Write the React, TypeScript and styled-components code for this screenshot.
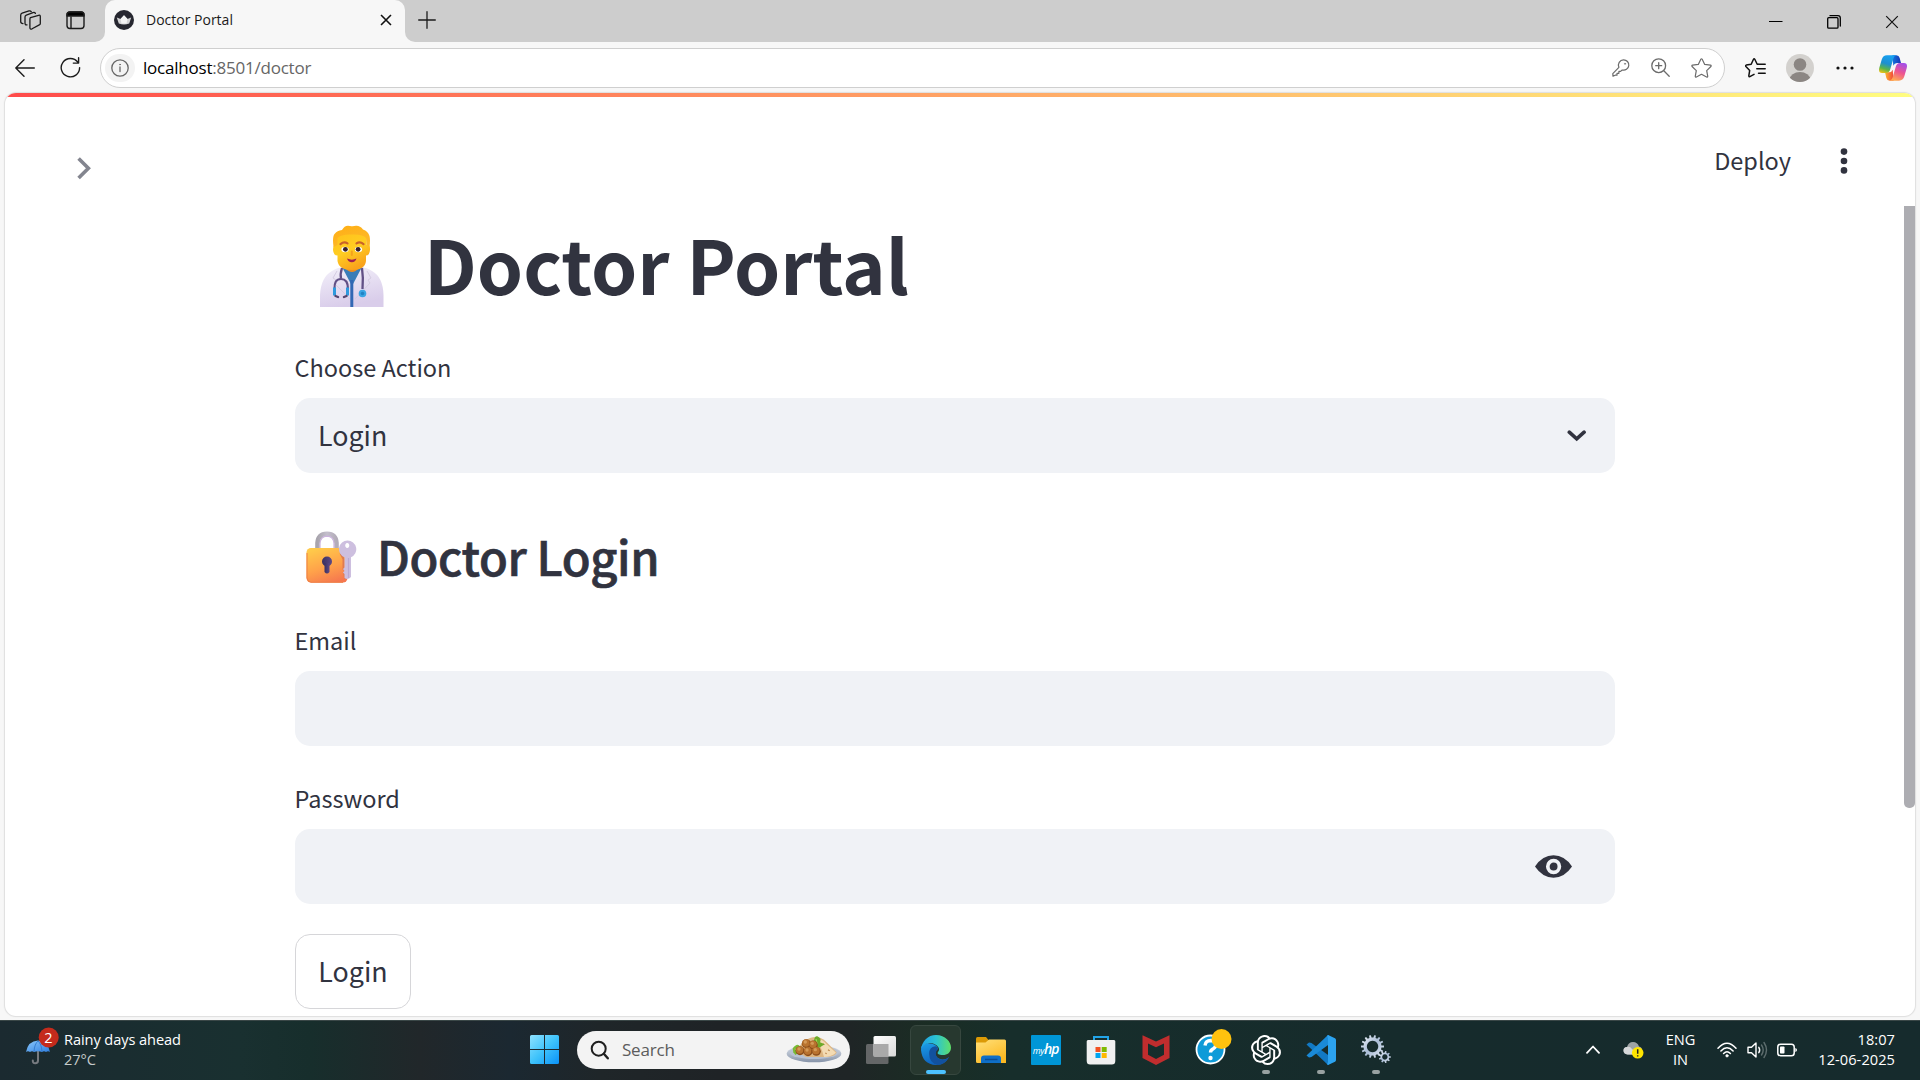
import React from "react";
import styled, { createGlobalStyle } from "styled-components";
import { SiOpenai } from "react-icons/si";

const sans = `"Noto Sans CJK SC", "Noto Sans", sans-serif`;
const system = `"Open Sans", "Noto Sans", sans-serif`;

const GlobalStyle = createGlobalStyle`
  * { box-sizing: border-box; }
  html, body { margin: 0; padding: 0; overflow: hidden; }
  svg { display: block; flex: none; }
`;

const Screen = styled.div`
  width: 1920px;
  height: 1080px;
  display: flex;
  flex-direction: column;
  overflow: hidden;
  background: #f7f7f7;
  font-family: ${system};
`;

/* ---------- Browser window ---------- */

const TabStrip = styled.div`
  height: 42px;
  display: flex;
  background: #f7f7f7;
`;

const StripStart = styled.div`
  width: 105px;
  display: flex;
  align-items: center;
  padding: 0 0 2px 20px;
  gap: 25px;
  background: #cdcdcd;
  border-bottom-right-radius: 10px;
`;

const TabBack = styled.div`
  width: 300px;
  background: #cdcdcd;
`;

const Tab = styled.div`
  height: 42px;
  display: flex;
  align-items: center;
  padding: 0 13px 2px 9px;
  background: #f7f7f7;
  border-radius: 10px 10px 0 0;
`;

const TabTitle = styled.span`
  flex: 1;
  margin: -1px 0 0 12px;
  font-size: 14px;
  letter-spacing: 0;
  color: #1b1b1b;
  white-space: nowrap;
`;

const StripEnd = styled.div`
  flex: 1;
  display: flex;
  align-items: center;
  justify-content: space-between;
  padding: 0 21px 3px 13px;
  background: #cdcdcd;
  border-bottom-left-radius: 10px;
`;

const WindowControls = styled.div`
  display: flex;
  align-items: center;
  gap: 44px;
  padding-top: 4px;
`;

const Toolbar = styled.div`
  height: 51px;
  display: flex;
  align-items: center;
  padding: 0 13px 0 15px;
`;

const AddressBar = styled.div`
  width: 1625px;
  height: 40px;
  margin-left: 19px;
  padding: 0 12px 0 4px;
  display: flex;
  align-items: center;
  border: 1px solid #cfcfcf;
  border-radius: 20px;
  background: #fff;
`;

const SiteInfo = styled.div`
  width: 30px;
  height: 28px;
  border-radius: 14px;
  display: flex;
  align-items: center;
  justify-content: center;
  background: #f3f3f3;
`;

const Url = styled.span`
  flex: 1;
  margin-left: 8px;
  font-size: 17px;
  letter-spacing: -0.22px;
  color: #666;
  white-space: nowrap;
  b { font-weight: 400; color: #000; }
`;

const AddressActions = styled.div`
  display: flex;
  align-items: center;
  gap: 21px;
`;

const ToolbarActions = styled.div`
  flex: 1;
  display: flex;
  align-items: center;
  padding-left: 20px;
`;

/* ---------- Page ---------- */

const Page = styled.div`
  height: 923px;
  margin: 0 5px;
  display: flex;
  flex-direction: column;
  overflow: hidden;
  background: #fff;
  border-radius: 11px;
  box-shadow: 0 0 1px 1px #dedede;
`;

const Decoration = styled.div`
  height: 4px;
  flex: none;
  background: linear-gradient(90deg, #ff4b4b, #fffd80);
`;

const PageHeader = styled.header`
  height: 109px;
  display: flex;
  justify-content: space-between;
  padding: 44px 66px 0 70px;
`;

const HeaderLeft = styled.div`
  padding-top: 15px;
`;

const HeaderRight = styled.div`
  height: 40px;
  display: flex;
  align-items: center;
  gap: 48px;
`;

const Deploy = styled.span`
  font: 400 23.5px/39px ${sans};
  height: 40px;
  color: #31333f;
`;

const Scroller = styled.div`
  flex: 1;
  display: flex;
  justify-content: space-between;
  min-height: 0;
`;

const Thumb = styled.div`
  width: 11px;
  height: 602px;
  border-radius: 0 0 5px 5px;
  background: #adadb2;
`;

const Main = styled.main`
  width: 1610px;
  padding: 12px 0 0 290px;
  font-family: ${sans};
  color: #31333f;
`;

const Title = styled.h1`
  height: 90px;
  margin: 0 0 41px;
  padding-left: 25px;
  display: flex;
  align-items: center;
  gap: 40px;
  font-size: 74px;
  line-height: 90px;
  font-weight: 700;
  white-space: nowrap;
  svg { margin-top: 6px; }
`;

const Subtitle = styled.h3`
  height: 64px;
  margin: 51px 0 34px;
  padding-left: 11px;
  display: flex;
  align-items: center;
  gap: 20px;
  font-size: 47px;
  line-height: 64px;
  font-weight: 500;
  letter-spacing: -0.36px;
  -webkit-text-stroke: 0.7px #31333f;
  white-space: nowrap;
  svg { margin-top: 1px; }
`;

const Field = styled.div`
  & + & { margin-top: 34px; }
`;

const Label = styled.label`
  display: block;
  height: 36px;
  margin: 0 0 13px -0.5px;
  font-size: 23.5px;
  line-height: 36px;
`;

const Control = styled.div<{ $end: number; $split?: boolean }>`
  height: 75px;
  padding: 0 ${(p) => p.$end}px 0 23px;
  display: flex;
  align-items: center;
  justify-content: ${(p) => (p.$split ? "space-between" : "flex-end")};
  border-radius: 15px;
  background: #f0f2f6;
  font-size: 26.8px;
`;

const Value = styled.span`
  height: 75px;
  line-height: 73px;
`;

const SubmitButton = styled.button`
  width: 116px;
  height: 75px;
  margin-top: 30px;
  padding: 0 0 2px;
  display: block;
  border: 1px solid #d6d6d9;
  border-radius: 15px;
  background: #fff;
  color: #31333f;
  font: 400 26.8px/70px ${sans};
`;

/* ---------- Taskbar ---------- */

const Taskbar = styled.footer`
  height: 60px;
  margin-top: 4px;
  padding-bottom: 2px;
  display: flex;
  align-items: center;
  border-top: 1px solid #3a4747;
  color: #fff;
  background: linear-gradient(90deg, #1b2a30 0, #193030 240px, #172e2c 310px, #21272a 420px,
    #1b2831 510px, #1f2629 600px, #1f2326 720px, #1f2526 850px, #1a2d24 930px, #172e2b 1010px, #162b2c 1400px, #162b2d 1920px);
`;

const Widgets = styled.div`
  width: 530px;
  padding-left: 25px;
  display: flex;
  align-items: center;
  gap: 4px;
  & > svg { margin-bottom: 7px; }
`;

const TrayText = styled.div<{ $align?: string; $spacing?: number }>`
  margin-bottom: 2px;
  font-size: 14.6px;
  line-height: 20px;
  letter-spacing: ${(p) => p.$spacing ?? -0.08}px;
  text-align: ${(p) => p.$align ?? "left"};
  white-space: nowrap;
`;

const Muted = styled.div`
  color: #c5cbcb;
`;

const SearchBox = styled.div`
  width: 273px;
  height: 38px;
  margin-left: 18px;
  padding: 0 8px 0 13px;
  display: flex;
  align-items: center;
  border-radius: 19px;
  background: #f3f3f3;
  color: #5c5c5c;
  font-size: 17px;
  letter-spacing: -0.2px;
  span { flex: 1; margin-left: 12px; }
`;

const Apps = styled.div`
  display: flex;
  margin-left: 3px;
`;

const AppSlot = styled.div<{ $active?: boolean }>`
  width: 51px;
  height: 50px;
  margin: 0 2px;
  padding-top: 9px;
  display: flex;
  flex-direction: column;
  align-items: center;
  gap: 5px;
  border-radius: 6px;
  border: 1px solid ${(p) => (p.$active ? "#37473f" : "transparent")};
  background: ${(p) => (p.$active ? "#27382f" : "transparent")};
`;

const Running = styled.div<{ $active?: boolean }>`
  width: ${(p) => (p.$active ? 20 : 8)}px;
  height: 4px;
  border-radius: 2px;
  background: ${(p) => (p.$active ? "#4cc2ff" : "#98a1a1")};
`;

const HpTile = styled.div`
  width: 30px;
  height: 30px;
  border-radius: 1px;
  background: #0096d6;
  font: italic 400 9px/28px ${system};
  letter-spacing: -0.4px;
  text-align: center;
  white-space: nowrap;
  color: #fff;
  b { font-size: 14px; font-weight: 600; letter-spacing: -1.2px; }
`;

const Tray = styled.div`
  margin-left: auto;
  padding-right: 25px;
  display: flex;
  align-items: center;
`;

const Gap = styled.div<{ $w: number }>`
  width: ${(p) => p.$w}px;
`;

/* ---------- Drawings ---------- */

const line = (w = 1.4, c = "#1b1b1b") => ({
  fill: "none",
  stroke: c,
  strokeWidth: w,
  strokeLinecap: "round" as const,
  strokeLinejoin: "round" as const,
});

const WorkspacesIcon = () => (
  <svg width="21" height="20" viewBox="0 0 21 20" {...line(1.3)}>
    <path d="M10.5 7.6 18.6 5.3q1.7-.4 1.7 1.2v7q0 1-1 1.4l-7.2 3.9q-2 .9-2.2-1.1V9.2q0-1.2.6-1.6z" />
    <path d="M7 14.800q-2 .4-2-1.500V7q0-1.300 1.300-1.900L13 2.600q1.700-.5 2.400.8" />
    <path d="M3 13.600q-2.300 0-2.300-2V5.200q0-1.500 1.400-2L9 .9q1.500-.4 2.200.7" />
  </svg>
);

const TabActionsIcon = () => (
  <svg width="19" height="19" viewBox="0 0 19 19" {...line(1.4)}>
    <rect x="1" y="1" width="17" height="16.500" rx="3" />
    <path d="M1 5V4q0-3 3-3h11q3 0 3 3v1z" fill="#000" />
    <path d="M5 6v11" />
  </svg>
);

const Favicon = () => (
  <svg width="20" height="20" viewBox="0 0 20 20">
    <circle cx="10" cy="10" r="10" fill="#262730" />
    <path d="M2.800 7.500 6.500 9 10 5.300 13.500 9l3.700-1.500-2 6q-5.200 2-10.400 0z" fill="#d4d4d6" />
    <path d="M10 5.300 13.500 9l-1 4.500H7.500L6.500 9z" fill="#f4f4f4" />
  </svg>
);

const CrossIcon = ({ size, w }: { size: number; w: number }) => (
  <svg width={size} height={size} viewBox="0 0 14 14" {...line(w, "#111")} strokeLinecap="butt">
    <path d="M1.200 1.200 12.800 12.800M12.800 1.200 1.200 12.800" />
  </svg>
);

const PlusIcon = () => (
  <svg width="18" height="18" viewBox="0 0 18 18" {...line(1.300)}>
    <path d="M9 .7v16.600M.7 9h16.600" />
  </svg>
);

const RestoreIcon = () => (
  <svg width="14" height="14" viewBox="0 0 14 14" {...line(1.300, "#000")}>
    <rect x=".7" y="2.700" width="10.300" height="10.500" rx="1" />
    <path d="M3 .7h8q2.300 0 2.300 2.300v8" />
  </svg>
);

const BackIcon = () => (
  <svg width="20" height="18" viewBox="0 0 20 18" {...line(1.400)}>
    <path d="M19.300 9H.8M9 .8.8 9 9 17.200" />
  </svg>
);

const ReloadIcon = () => (
  <svg width="21" height="21" viewBox="0 0 21 21" {...line(1.400)}>
    <path d="M19.600 10.600A9.200 9.200 0 1 1 17.800 5.200M18.600.8v5.300h-5.300" />
  </svg>
);

const InfoIcon = () => (
  <svg width="18" height="18" viewBox="0 0 18 18" {...line(1.300, "#666")}>
    <circle cx="9" cy="9" r="8.200" />
    <path d="M9 8v4.500" />
    <circle cx="9" cy="5.600" r=".5" fill="#666" stroke="#666" strokeWidth=".6" />
  </svg>
);

const KeyIcon = () => (
  <svg width="18" height="18" viewBox="0 0 18 18" {...line(1.200, "#6b6b6b")}>
    <path d="M11.500.8a5.200 5.200 0 1 1-1.300 10.200L8.600 12.400H6.900v1.900H5v1.900H3.200L1 17.200.8 14.600 6.900 8.300A5.300 5.300 0 0 1 11.500.8z" />
    <circle cx="13" cy="4.800" r=".7" fill="#6b6b6b" strokeWidth=".3" />
  </svg>
);

const ZoomIcon = () => (
  <svg width="19" height="19" viewBox="0 0 19 19" {...line(1.300, "#6b6b6b")}>
    <circle cx="7.700" cy="7.700" r="6.900" />
    <path d="M12.800 12.800 18.200 18.200M7.700 4.700v6M4.700 7.700h6" />
  </svg>
);

const StarIcon = () => (
  <svg width="21" height="20" viewBox="0 0 21 20" {...line(1.200, "#6b6b6b")}>
    <path d="M9.800 1.300q.7-1.100 1.400 0l2.500 5.100 5.700.8q1.300.3.5 1.300l-4.200 4.100 1 5.600q.1 1.300-1.100.8L10.500 16.300l-5.100 2.700q-1.200.5-1.100-.8l1-5.600L1.100 8.500q-.8-1 .5-1.300l5.700-.8z" />
  </svg>
);

const FavoritesIcon = () => (
  <svg width="21" height="20" viewBox="0 0 21 20" {...line(1.500, "#111")}>
    <path d="M13 6.300h-.8L9.800 1.300q-.7-1.100-1.300 0L6.200 6.300l-4.900.8q-1.200.4-.4 1.300l3.800 4-.9 5.400q0 1.200 1.100.8l4.100-2.200" />
    <path d="M13.500 6.300h6.700M11.800 10.800h8.400M13.500 15.200h6.700" />
  </svg>
);

const Avatar = () => (
  <svg width="28" height="28" viewBox="0 0 28 28">
    <clipPath id="face"><circle cx="14" cy="14" r="14" /></clipPath>
    <g clipPath="url(#face)">
      <rect width="28" height="28" fill="#d3d1ce" />
      <circle cx="14" cy="10.500" r="6.300" fill="#8b8683" />
      <ellipse cx="14" cy="25.500" rx="10.300" ry="7.500" fill="#8b8683" />
    </g>
  </svg>
);

const MoreIcon = () => (
  <svg width="18" height="4" viewBox="0 0 18 4" fill="#111">
    <circle cx="2" cy="2" r="1.600" /><circle cx="9" cy="2" r="1.600" /><circle cx="16" cy="2" r="1.600" />
  </svg>
);

const CopilotIcon = () => (
  <svg width="28" height="26" viewBox="0 0 84 78">
    <defs>
      <linearGradient id="cpA" x1="0.500" y1="0" x2="0.200" y2="1">
        <stop offset="0" stopColor="#18a0f0" /><stop offset=".45" stopColor="#1d8fd0" />
        <stop offset=".75" stopColor="#5bb548" /><stop offset="1" stopColor="#f2c216" />
      </linearGradient>
      <linearGradient id="cpB" x1="0.700" y1="0" x2="0.300" y2="1">
        <stop offset="0" stopColor="#a44fe8" /><stop offset=".5" stopColor="#ee5590" /><stop offset="1" stopColor="#ffad50" />
      </linearGradient>
      <linearGradient id="cpC"><stop offset="0" stopColor="#1275dc" /><stop offset="1" stopColor="#1736b5" /></linearGradient>
      <linearGradient id="cpD"><stop offset="0" stopColor="#ffb52e" /><stop offset="1" stopColor="#f0453c" /></linearGradient>
    </defs>
    <path d="M40 1h12q8 0 10 8l4 15H54q-8 0-11 8z" fill="url(#cpC)" />
    <path d="M44 77H32q-8 0-10-8l-4-17h12q8 0 11-8z" fill="url(#cpD)" />
    <path d="M24 1h27q-6 2-8 10L34 42q-3 12-13 12H9Q-3 54 1 38L8 14Q12 1 24 1z" fill="url(#cpA)" />
    <path d="M60 77H33q6-2 8-10l9-31q3-12 13-12h12q12 0 8 16l-7 24Q72 77 60 77z" fill="url(#cpB)" />
  </svg>
);

const SidebarChevron = () => (
  <svg width="18" height="26" viewBox="0 0 18 26" fill="none" stroke="#83858f" strokeWidth="3.600">
    <path d="M3.600 2.500 13.400 12.300 3.600 22.100" />
  </svg>
);

const KebabIcon = () => (
  <svg width="10" height="26" viewBox="0 0 10 26" fill="#31333f">
    <circle cx="5" cy="3.600" r="3.300" /><circle cx="5" cy="13" r="3.300" /><circle cx="5" cy="22.400" r="3.300" />
  </svg>
);

const DoctorEmoji = () => (
  <svg width="64" height="82" viewBox="0 0 64 82">
    <defs>
      <linearGradient id="coat" x1="0" y1="0" x2="0.300" y2="1">
        <stop offset="0" stopColor="#f3f0fa" /><stop offset="1" stopColor="#d9cdea" />
      </linearGradient>
      <linearGradient id="skin" x1="0" y1="0" x2="0.500" y2="1">
        <stop offset="0" stopColor="#ffc01a" /><stop offset=".55" stopColor="#ffcd22" /><stop offset="1" stopColor="#f9a31c" />
      </linearGradient>
      <linearGradient id="hair" x1="0" y1="0" x2="0.600" y2="1">
        <stop offset="0" stopColor="#ffae12" /><stop offset="1" stopColor="#fdb92c" />
      </linearGradient>
    </defs>
    <path d="M0 82V70Q1 52 12 46 17 42.500 24 42H40Q47 42.500 52 46 63 52 63.500 70V82z" fill="url(#coat)" />
    <path d="M22 42 32 61 42 42z" fill="#3a7cb8" />
    <path d="M30.300 55h3v27h-3z" fill="#3268b4" />
    <path d="M25 43Q32 51 39 43z" fill="#ef8d20" />
    <path d="M17 7H46.500V20Q50.500 19 50 25 49.500 30.500 46 30.500V36Q45 45 32 45 19 45 17.500 36V30.500Q13.500 30.500 13 25 13 19 17 20z" fill="url(#skin)" />
    <path d="M13.500 22Q12 11 15 8.500 17 5.500 22 5 25-.5 30 1 33 1.500 36 .8 40 .5 43 4.500 48 6 49.500 11 50.500 15 49.500 22L46.500 20 46 13Q43 9 32 9.500 21 9 17.500 13V20z" fill="url(#hair)" />
    <path d="M20.500 19.200q3.500-3 7-.8M43.500 19.200q-3.500-3-7-.8" fill="none" stroke="#c9632a" strokeWidth="2.200" strokeLinecap="round" />
    <ellipse cx="25" cy="24.500" rx="3.600" ry="2.700" fill="#fff" /><ellipse cx="38.500" cy="24.500" rx="3.600" ry="2.700" fill="#fff" />
    <circle cx="25.400" cy="24.300" r="2.400" fill="#36212b" /><circle cx="38.100" cy="24.300" r="2.400" fill="#36212b" />
    <path d="M31.800 26.500v3.500" stroke="#f5a11b" strokeWidth="2" strokeLinecap="round" />
    <path d="M27 33.500q5 2.300 9.500 0-1 3.700-4.700 3.700t-4.800-3.700z" fill="#a1204f" />
    <path d="M17 46 13 53l3 2-2 3L30 74M47 46l4 7-3 2 2 3L35 74" fill="none" stroke="#d5cce2" strokeWidth="1" />
    <path d="M22 43Q20 49 21 53.500M42 43Q43.500 53 42.500 64" fill="none" stroke="#625086" strokeWidth="2.300" />
    <path d="M14.500 64Q14 54 21 54T28 64" fill="none" stroke="#625086" strokeWidth="2.200" />
    <path d="M14.500 62.500v8M27.500 62.500v8" stroke="#2e9ade" strokeWidth="3" />
    <path d="M15.500 71l2.500 1M26.500 71l-2.500 1" stroke="#55466f" strokeWidth="2.400" strokeLinecap="round" />
    <circle cx="42.500" cy="68.500" r="3.800" fill="#3aa5e4" /><circle cx="42.500" cy="68.500" r="1.800" fill="#2183c4" />
  </svg>
);

const LockEmoji = () => (
  <svg width="51" height="52" viewBox="0 0 51 52">
    <defs>
      <linearGradient id="lock" x1="0.300" y1="0" x2="0.700" y2="1">
        <stop offset="0" stopColor="#ffc94a" /><stop offset=".55" stopColor="#ffa14a" /><stop offset="1" stopColor="#f5774f" />
      </linearGradient>
      <linearGradient id="shackle"><stop offset="0" stopColor="#a8a4ad" /><stop offset=".5" stopColor="#c4bfcc" /><stop offset="1" stopColor="#b3acb9" /></linearGradient>
      <linearGradient id="hole"><stop offset="0" stopColor="#3a3160" /><stop offset="1" stopColor="#5d4885" /></linearGradient>
    </defs>
    <path d="M11.500 18V12Q12 3 21 2.700 30 3 30.500 12v6" fill="none" stroke="url(#shackle)" strokeWidth="4.600" />
    <path d="M14 17V12.500Q14.500 5.500 21 5.200 27.500 5.500 28 12.500V17" fill="none" stroke="#cbb3dd" strokeWidth="1.200" />
    <rect x=".5" y="17" width="41" height="34.500" rx="4.500" fill="url(#lock)" />
    <path d="M1 22v25q.5 4 4 4.300h32" fill="none" stroke="#ee7f45" strokeWidth="1" />
    <circle cx="21" cy="30.500" r="5" fill="url(#hole)" /><path d="M18.500 32h5v9q-2.500 3-5 0z" fill="url(#hole)" />
    <path d="M34.500 22Q37 27 37.500 28v10l2 2-1.500 2 1.500 6" fill="none" stroke="#df7b51" strokeWidth="2" />
    <path fillRule="evenodd" d="M41.500 9.500a8.700 8.700 0 0 1 3.500 16.700V46q-3 3.500-6.500 1V43l-1.600-1.500L38.500 40 37 38l1.500-1.500V26.300A8.700 8.700 0 0 1 41.500 9.500zm-.3 2.500a2 2.500 0 1 0 .1 0z" fill="#cdbfdf" />
    <path d="M42.500 27v20" stroke="#bba9d2" strokeWidth="1.200" />
  </svg>
);

const SelectChevron = () => (
  <svg width="20" height="14" viewBox="0 0 20 14" {...line(3.600, "#31333f")} strokeLinejoin="miter">
    <path d="M2.300 3.200 9.700 9.800 17.100 3.200" />
  </svg>
);

const EyeIcon = () => (
  <svg width="37" height="23" viewBox="0 0 37 23">
    <path d="M0 11.500Q7.500.3 18.500.3T37 11.500Q29.500 22.700 18.500 22.700T0 11.500z" fill="#31333f" />
    <circle cx="18.600" cy="11.500" r="5.800" fill="none" stroke="#f0f2f6" strokeWidth="3.700" />
  </svg>
);

const UmbrellaIcon = () => (
  <svg width="35" height="38" viewBox="0 0 35 38">
    <defs><linearGradient id="umb" x1="0" y1="0" x2="1" y2="1"><stop offset="0" stopColor="#8ac8fb" /><stop offset="1" stopColor="#2f7fe0" /></linearGradient></defs>
    <path d="M13 24v9.500q0 2.800-2.700 2.800T7.800 33.500" fill="none" stroke="#777b80" strokeWidth="2" strokeLinecap="round" />
    <path d="M1 25Q3 14 13 13.500 23 14 25 25 23 23.500 21 25 19 23.500 17 25 13 23.500 9 25 7 23.500 5 25 3 23.500 1 25z" fill="url(#umb)" />
    <path d="M9 24.500Q9.500 17 13 14 16.500 17 17 24.500" fill="none" stroke="#2c73c8" strokeWidth=".8" />
    <circle cx="23.700" cy="10.500" r="10" fill="#c42b1c" />
    <text x="23.500" y="15.500" textAnchor="middle" fontSize="14.500" fill="#fff" fontFamily="Open Sans">2</text>
  </svg>
);

const WindowsIcon = () => (
  <svg width="29" height="29" viewBox="0 0 29 29">
    <defs><linearGradient id="win" x1="0" y1="0" x2="1" y2="1"><stop offset="0" stopColor="#8fe2ff" /><stop offset=".5" stopColor="#3fc3fb" /><stop offset="1" stopColor="#0a92f8" /></linearGradient></defs>
    <path d="M1.500 0H14v14H0V1.500Q0 0 1.500 0zM15 0h12.500Q29 0 29 1.500V14H15zM0 15h14v14H1.500Q0 29 0 27.500zM15 15h14v12.500q0 1.500-1.500 1.500H15z" fill="url(#win)" />
  </svg>
);

const MagnifierIcon = () => (
  <svg width="20" height="20" viewBox="0 0 20 20" {...line(2, "#1f1f1f")}>
    <circle cx="8.700" cy="8.700" r="7" /><path d="M13.800 13.800 17.800 18.300" strokeWidth="2.400" />
  </svg>
);

const FoodIcon = () => (
  <svg width="56" height="30" viewBox="0 0 168 90">
    <defs><linearGradient id="plate" x1="0" y1="0" x2="0" y2="1"><stop offset="0" stopColor="#dfe5ee" /><stop offset="1" stopColor="#8693a8" /></linearGradient></defs>
    <ellipse cx="84" cy="56" rx="82" ry="26" fill="url(#plate)" />
    <ellipse cx="84" cy="52" rx="74" ry="20" fill="#b8c2d2" />
    <path d="M34 50Q42 18 74 8 100 2 118 18L152 52Q150 64 120 66L60 66z" fill="#ddb682" />
    <path d="M84 12Q110 10 122 28L150 53Q134 66 114 66 106 30 84 12z" fill="#f3dbb3" />
    <path d="M110 26l5 3M126 44l5 3M118 54l4 2" stroke="#b98145" strokeWidth="3.500" />
    <path d="M82 30q2-30 12-26 14 6 8 18l14 6-16 10z" fill="#6cab2a" />
    <path d="M20 40q14-18 22-6l4 14-18 12-6-8z" fill="#78ba34" />
    <path d="M26 42l14 6M90 12l4 16" stroke="#a9db5a" strokeWidth="3" />
    {[[61, 26], [82, 30], [42, 47], [66, 50], [91, 49]].map(([x, y]) => (
      <g key={`${x}-${y}`}><circle cx={x} cy={y} r="13.500" fill="#8c4d1a" /><circle cx={x - 1} cy={y - 2} r="11" fill="#b9732f" /><circle cx={x - 3} cy={y - 5} r="5" fill="#d49a58" /></g>
    ))}
  </svg>
);

const TaskViewIcon = () => (
  <svg width="30" height="30" viewBox="0 0 30 30">
    <defs><linearGradient id="tv" x1="0" y1="0" x2="1" y2="1"><stop offset="0" stopColor="#fff" /><stop offset="1" stopColor="#d9d9d9" /></linearGradient></defs>
    <rect x="0" y="9" width="22.500" height="20" rx="1.500" fill="#646667" />
    <rect x="7.500" y="1" width="22.500" height="20.500" rx="1.500" fill="url(#tv)" />
    <path d="M7.500 9h15v12.500h-15z" fill="#a9a9a9" />
  </svg>
);

const EdgeIcon = () => (
  <svg width="30" height="30" viewBox="0 0 24 24">
    <defs>
      <linearGradient id="edA" x1="0" y1="0.300" x2="1" y2="0.300"><stop offset="0" stopColor="#1f9fe8" /><stop offset=".5" stopColor="#2bc3d2" /><stop offset="1" stopColor="#5fe06a" /></linearGradient>
      <linearGradient id="edB" x1="0" y1="0" x2="0.300" y2="1"><stop offset="0" stopColor="#1b9de8" /><stop offset="1" stopColor="#0f62bd" /></linearGradient>
    </defs>
    <path d="M0 12Q0 6 6 6.500q7 .5 7.500 4.500-2 1-2 4 .5 4 5.500 4.500 3 0 5.500-2Q19 24 12 24 1 23.500 0 12z" fill="url(#edB)" />
    <path d="M6.500 15Q6.500 9.500 11.500 9q2 .5 2 2.500-1.700 1.200-1.700 3.500.5 4.500 5.500 4.700 3 0 5-2Q18.500 24 13.500 23.900 6.500 22.500 6.500 15z" fill="#12519f" />
    <path d="M0 12C.5 5 5.500 0 12 0c7.500 0 12 5.500 12 10 0 4-3 6-6.500 6-3.300 0-4.800-1-4-2.200 1-1.300 1.300-2.300.5-3.800C12.500 7.500 10 6.300 7 6.300 3.500 6.300.8 8.500 0 12z" fill="url(#edA)" />
  </svg>
);

const ExplorerIcon = () => (
  <svg width="30" height="30" viewBox="0 0 30 30">
    <defs><linearGradient id="fo" x1="0" y1="0" x2="0.600" y2="1"><stop offset="0" stopColor="#ffe07a" /><stop offset="1" stopColor="#fcb922" /></linearGradient></defs>
    <path d="M0 3.500Q0 2 1.500 2H10l3 3.500V10H0z" fill="#dc9a06" />
    <path d="M0 7.500h9.500L13 4.500h15.500Q30 4.500 30 6V28H1.500Q0 28 0 26.500z" fill="url(#fo)" />
    <path d="M5 28v-4.500Q5 20.500 8 20.500H22q3 0 3 3V28z" fill="#0f6fc7" />
    <path d="M9 24.500h12.500" stroke="#0a4d94" strokeWidth="1.500" />
  </svg>
);

const StoreIcon = () => (
  <svg width="30" height="30" viewBox="0 0 30 30">
    <path d="M8 6V2h14v4" fill="none" stroke="#22a5e8" strokeWidth="2" />
    <path d="M.7 6.500Q.7 5 2 5h26q1.300 0 1.300 1.500V26q0 3.500-3.500 3.500H4.200Q.7 29.500.7 26z" fill="#f0f0f0" />
    <path d="M9.500 12h5v5h-5z" fill="#f25022" /><path d="M15.700 12h5v5h-5z" fill="#7fba00" />
    <path d="M9.500 18h5v5h-5z" fill="#00a4ef" /><path d="M15.700 18h5v5h-5z" fill="#ffb900" />
  </svg>
);

const McAfeeIcon = () => (
  <svg width="30" height="30" viewBox="0 0 30 30">
    <path d="M1.500.3 15 6.500 28.500.3V23L15 30 1.500 23zM7 8.500V19.800L15 24l8-4.200V8.500L15 12.300z" fill="#c02d2e" fillRule="evenodd" />
  </svg>
);

const HelpIcon = () => (
  <svg width="38" height="36" viewBox="0 0 38 36">
    <circle cx="15.500" cy="20.500" r="14" fill="#0f9bd8" stroke="#fff" strokeWidth="1.800" />
    <path d="M10 16.500q.5-5 5.800-5 5 .3 5 4.300 0 2.500-3 4.300-2.300 1.300-2.300 3.400" fill="none" stroke="#fff" strokeWidth="3.400" />
    <circle cx="15.500" cy="29" r="2.200" fill="#fff" />
    <circle cx="26.500" cy="10" r="10" fill="#ffc20e" />
  </svg>
);

const HelpWrap = styled.div`
  height: 30px;
  margin: -6px 0 0 7px;
`;

const VsCodeIcon = () => (
  <svg width="30" height="30" viewBox="0 0 30 30">
    <path d="M.5 9.500 3 7.500 5.500 8 29 25 22 30z" fill="#1279c4" />
    <path d="M.5 20.500 3 22.500 5.500 22 29 5 22 0z" fill="#1a8ad8" />
    <path d="M22 0 29 3.200Q30 3.700 30 5V25Q30 26.300 29 26.800L22 30Q20.500 29.500 22 27V3Q20.500.5 22 0z" fill="#2ca3f0" />
  </svg>
);

const gear = (cx: number, cy: number, ro: number, ri: number, n: number) => {
  const pts: string[] = [];
  for (let i = 0; i < n; i++) {
    const a = (i / n) * Math.PI * 2;
    const s = (Math.PI * 2) / n;
    for (const [k, r] of [[-0.27, ri], [-0.17, ro], [0.17, ro], [0.27, ri]]) {
      pts.push(`${(cx + Math.cos(a + s * k) * r).toFixed(2)} ${(cy + Math.sin(a + s * k) * r).toFixed(2)}`);
    }
  }
  return `M${pts.join("L")}z`;
};

const GearsIcon = () => (
  <svg width="30" height="30" viewBox="0 0 30 30">
    <defs><linearGradient id="gr" x1="0" y1="0" x2="1" y2="1"><stop offset="0" stopColor="#f2f6fb" /><stop offset=".5" stopColor="#a9bcd6" /><stop offset="1" stopColor="#e6edf6" /></linearGradient></defs>
    <path fillRule="evenodd" fill="url(#gr)" d={`${gear(11.5, 11.5, 11.5, 9, 14)}M11.500 5.800a5.700 5.700 0 1 0 .1 0z`} />
    <path fillRule="evenodd" fill="url(#gr)" d={`${gear(23.8, 22, 6, 4.4, 9)}M23.800 19.300a2.700 2.700 0 1 0 .1 0z`} />
  </svg>
);

const TrayChevron = () => (
  <svg width="14" height="9" viewBox="0 0 14 9" {...line(1.800, "#fff")}><path d="M1 7.800 7 1.500l6 6.300" /></svg>
);

const CloudIcon = () => (
  <svg width="21" height="18" viewBox="0 0 21 18">
    <path d="M4.500 13.500Q.5 13 .5 9.500T4 6Q5.500 1 10 1t6 4.500q3 .5 3 4t-3 4z" fill="#9ea3a4" />
    <path d="M4.500 13.500Q.5 13 .5 9.500T4 6q3-1 5 2l6 5.500z" fill="#d5d8d9" />
    <circle cx="14.700" cy="11.800" r="5.800" fill="#ffe500" />
    <path d="M14.700 8.300v4.500M14.700 14.300v1.200" stroke="#222" strokeWidth="1.500" />
  </svg>
);

const WifiIcon = () => (
  <svg width="20" height="16" viewBox="0 0 20 16" {...line(1.500, "#fff")}>
    <path d="M1 6.200Q10-3.700 19 6.200M3.900 9Q10 2.500 16.100 9M6.600 11.500Q10 8 13.400 11.500" />
    <circle cx="10" cy="13.800" r="1.300" fill="#fff" strokeWidth=".5" />
  </svg>
);

const SpeakerIcon = () => (
  <svg width="21" height="18" viewBox="0 0 21 18" {...line(1.400, "#fff")}>
    <path d="M1 6.300h3.500L9 2v14l-4.500-4.300H1z" />
    <path d="M11.800 6.300q1.800 2.700 0 5.400" />
    <path d="M14.500 4q3.400 5 0 10M17 1.500q5 7.500 0 15" stroke="#5e6d6e" />
  </svg>
);

const BatteryIcon = () => (
  <svg width="20" height="14" viewBox="0 0 20 14">
    <rect x=".8" y="1.300" width="16.400" height="11.400" rx="2.800" fill="none" stroke="#fff" strokeWidth="1.500" />
    <rect x="3" y="3.500" width="4.500" height="7" rx=".8" fill="#fff" />
    <path d="M18.300 5v4q1.700-.5 1.700-2t-1.700-2z" fill="#fff" />
  </svg>
);

const apps: { name: string; icon: React.ReactNode; active?: boolean; running?: boolean }[] = [
  { name: "taskview", icon: <TaskViewIcon /> },
  { name: "edge", icon: <EdgeIcon />, active: true, running: true },
  { name: "explorer", icon: <ExplorerIcon /> },
  { name: "hp", icon: <HpTile>my<b>hp</b></HpTile> },
  { name: "store", icon: <StoreIcon /> },
  { name: "mcafee", icon: <McAfeeIcon /> },
  { name: "help", icon: <HelpWrap><HelpIcon /></HelpWrap> },
  { name: "chatgpt", icon: <SiOpenai size={30} color="#fff" />, running: true },
  { name: "code", icon: <VsCodeIcon />, running: true },
  { name: "settings", icon: <GearsIcon />, running: true },
];

export default function App() {
  return (
    <Screen>
      <GlobalStyle />
      <TabStrip>
        <StripStart>
          <WorkspacesIcon />
          <TabActionsIcon />
        </StripStart>
        <TabBack>
          <Tab>
            <Favicon />
            <TabTitle>Doctor Portal</TabTitle>
            <CrossIcon size={12} w={1.9} />
          </Tab>
        </TabBack>
        <StripEnd>
          <PlusIcon />
          <WindowControls>
            <svg width="14" height="2" viewBox="0 0 14 2"><path d="M0 .5h13.500" stroke="#000" /></svg>
            <RestoreIcon />
            <CrossIcon size={14} w={1.2} />
          </WindowControls>
        </StripEnd>
      </TabStrip>

      <Toolbar>
        <BackIcon />
        <Gap $w={25} />
        <ReloadIcon />
        <AddressBar>
          <SiteInfo><InfoIcon /></SiteInfo>
          <Url><b>localhost</b>:8501/doctor</Url>
          <AddressActions>
            <KeyIcon />
            <ZoomIcon />
            <StarIcon />
          </AddressActions>
        </AddressBar>
        <ToolbarActions>
          <FavoritesIcon />
          <Gap $w={20} />
          <Avatar />
          <Gap $w={22} />
          <MoreIcon />
          <Gap $w={25} />
          <CopilotIcon />
        </ToolbarActions>
      </Toolbar>

      <Page>
        <Decoration />
        <PageHeader>
          <HeaderLeft><SidebarChevron /></HeaderLeft>
          <HeaderRight>
            <Deploy>Deploy</Deploy>
            <KebabIcon />
          </HeaderRight>
        </PageHeader>
        <Scroller>
          <Main>
            <Title><DoctorEmoji />Doctor Portal</Title>
            <Field>
              <Label>Choose Action</Label>
              <Control $end={28} $split><Value>Login</Value><SelectChevron /></Control>
            </Field>
            <Subtitle><LockEmoji />Doctor Login</Subtitle>
            <Field>
              <Label>Email</Label>
              <Control $end={24} />
            </Field>
            <Field>
              <Label>Password</Label>
              <Control $end={43}><EyeIcon /></Control>
            </Field>
            <SubmitButton>Login</SubmitButton>
          </Main>
          <Thumb />
        </Scroller>
      </Page>

      <Taskbar>
        <Widgets>
          <UmbrellaIcon />
          <TrayText>
            <div>Rainy days ahead</div>
            <Muted>27°C</Muted>
          </TrayText>
        </Widgets>
        <WindowsIcon />
        <SearchBox>
          <MagnifierIcon />
          <span>Search</span>
          <FoodIcon />
        </SearchBox>
        <Apps>
          {apps.map((a) => (
            <AppSlot key={a.name} $active={a.active}>
              {a.icon}
              {a.running && <Running $active={a.active} />}
            </AppSlot>
          ))}
        </Apps>
        <Tray>
          <TrayChevron />
          <Gap $w={23} />
          <CloudIcon />
          <Gap $w={22} />
          <TrayText $align="center"><div>ENG</div><div>IN</div></TrayText>
          <Gap $w={22} />
          <WifiIcon />
          <Gap $w={10} />
          <SpeakerIcon />
          <Gap $w={9} />
          <BatteryIcon />
          <Gap $w={21} />
          <TrayText $align="right" $spacing={0.06}><div>18:07</div><div>12-06-2025</div></TrayText>
        </Tray>
      </Taskbar>
    </Screen>
  );
}
